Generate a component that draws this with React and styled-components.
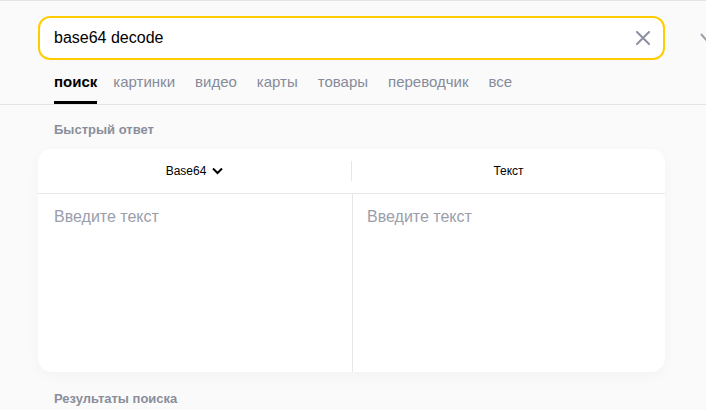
import styled, { createGlobalStyle } from "styled-components";

const GlobalStyle = createGlobalStyle`
  html, body {
    margin: 0;
    padding: 0;
    background: #fafafa;
    font-family: "Liberation Sans", Arial, sans-serif;
    overflow: hidden;
  }
`;

const tabs = ["поиск", "картинки", "видео", "карты", "товары", "переводчик", "все"];

const App = () => {
  return (
    <Page>
      <GlobalStyle />
      <Header>
        <SearchRow>
          <SearchBox>
            <Query>base64 decode</Query>
            <ClearButton aria-label="clear">
              <svg width="14" height="14" viewBox="0 0 14 14">
                <path d="M1 1 L13 13 M13 1 L1 13" stroke="#8c90a0" strokeWidth="2" strokeLinecap="round" />
              </svg>
            </ClearButton>
          </SearchBox>
          <SideIcon>
            <svg width="14" height="10" viewBox="0 0 14 10">
              <path d="M1 1 L7 8 L13 1" stroke="#9a9eab" strokeWidth="2" fill="none" />
            </svg>
          </SideIcon>
        </SearchRow>
        <Tabs>
          {tabs.map((t, i) => (
            <Tab key={t} active={i === 0}>
              {t}
            </Tab>
          ))}
        </Tabs>
      </Header>

      <Main>
        <SectionTitle>Быстрый ответ</SectionTitle>
        <Card>
          <CardHead>
            <HeadCell>
              Base64
              <svg width="11" height="8" viewBox="0 0 11 8">
                <path d="M1 1.5 L5.5 6 L10 1.5" stroke="#000" strokeWidth="2" fill="none" />
              </svg>
            </HeadCell>
            <HeadSep />
            <HeadCell>Текст</HeadCell>
          </CardHead>
          <CardBody>
            <Pane>Введите текст</Pane>
            <Pane right>Введите текст</Pane>
          </CardBody>
        </Card>
        <SectionTitle results>Результаты поиска</SectionTitle>
      </Main>
    </Page>
  );
};

const Page = styled.div`
  width: 706px;
  height: 410px;
  overflow: hidden;
`;
const Header = styled.header`
  border-top: 1px solid #e4e4e6;
  padding-top: 15px;
`;
const SearchRow = styled.div`
  display: flex;
  align-items: center;
  padding-left: 38px;
`;
const SearchBox = styled.div`
  box-sizing: border-box;
  flex-shrink: 0;
  width: 627px;
  height: 44px;
  border: 2px solid #ffcc00;
  border-radius: 12px;
  background: #fff;
  display: flex;
  align-items: center;
  padding: 0 13px 0 14px;
`;
const Query = styled.div`
  flex: 1;
  font-size: 16px;
  color: #000;
`;
const ClearButton = styled.div`
  display: flex;
  align-items: center;
  justify-content: center;
  width: 14px;
  height: 14px;
`;
const SideIcon = styled.div`
  flex-shrink: 0;
  margin-left: 35px;
  display: flex;
  align-items: center;
`;
const Tabs = styled.nav`
  display: flex;
  gap: 20px;
  padding-left: 54px;
  border-bottom: 1px solid #e4e4e8;
`;
const Tab = styled.div`
  padding: 13px 0 10px;
  line-height: 18px;
  font-size: 15px;
  color: ${(p) => (p.active ? "#000" : "#868a99")};
  font-weight: ${(p) => (p.active ? 700 : 400)};
  border-bottom: 3px solid ${(p) => (p.active ? "#000" : "transparent")};
  margin-right: ${(p) => (p.active ? "-4px" : "0")};
`;
const Main = styled.main`
  padding-left: 38px;
  width: 627px;
`;
const SectionTitle = styled.div`
  padding-left: 16px;
  margin-top: ${(p) => (p.results ? "19px" : "17px")};
  font-size: 13px;
  line-height: 16px;
  font-weight: 700;
  color: #8a8e9b;
`;
const Card = styled.section`
  margin-top: 11px;
  background: #fff;
  border-radius: 14px;
  box-shadow: 0 4px 14px rgba(0, 0, 0, 0.03);
  height: 223px;
  display: flex;
  flex-direction: column;
  overflow: hidden;
`;
const CardHead = styled.div`
  height: 44px;
  display: flex;
  align-items: center;
  border-bottom: 1px solid #e6e6ea;
`;
const HeadCell = styled.div`
  flex: 1;
  display: flex;
  align-items: center;
  justify-content: center;
  gap: 6px;
  font-size: 12px;
  color: #000;
`;
const HeadSep = styled.div`
  width: 1px;
  height: 20px;
  background: #e6e6ea;
`;
const CardBody = styled.div`
  flex: 1;
  display: flex;
`;
const Pane = styled.div`
  flex: 1;
  padding: 13px 0 0 ${(p) => (p.right ? "14px" : "16px")};
  font-size: 16px;
  line-height: 20px;
  color: #9a9eab;
  border-left: ${(p) => (p.right ? "1px solid #e6e6ea" : "none")};
`;

export default App;
